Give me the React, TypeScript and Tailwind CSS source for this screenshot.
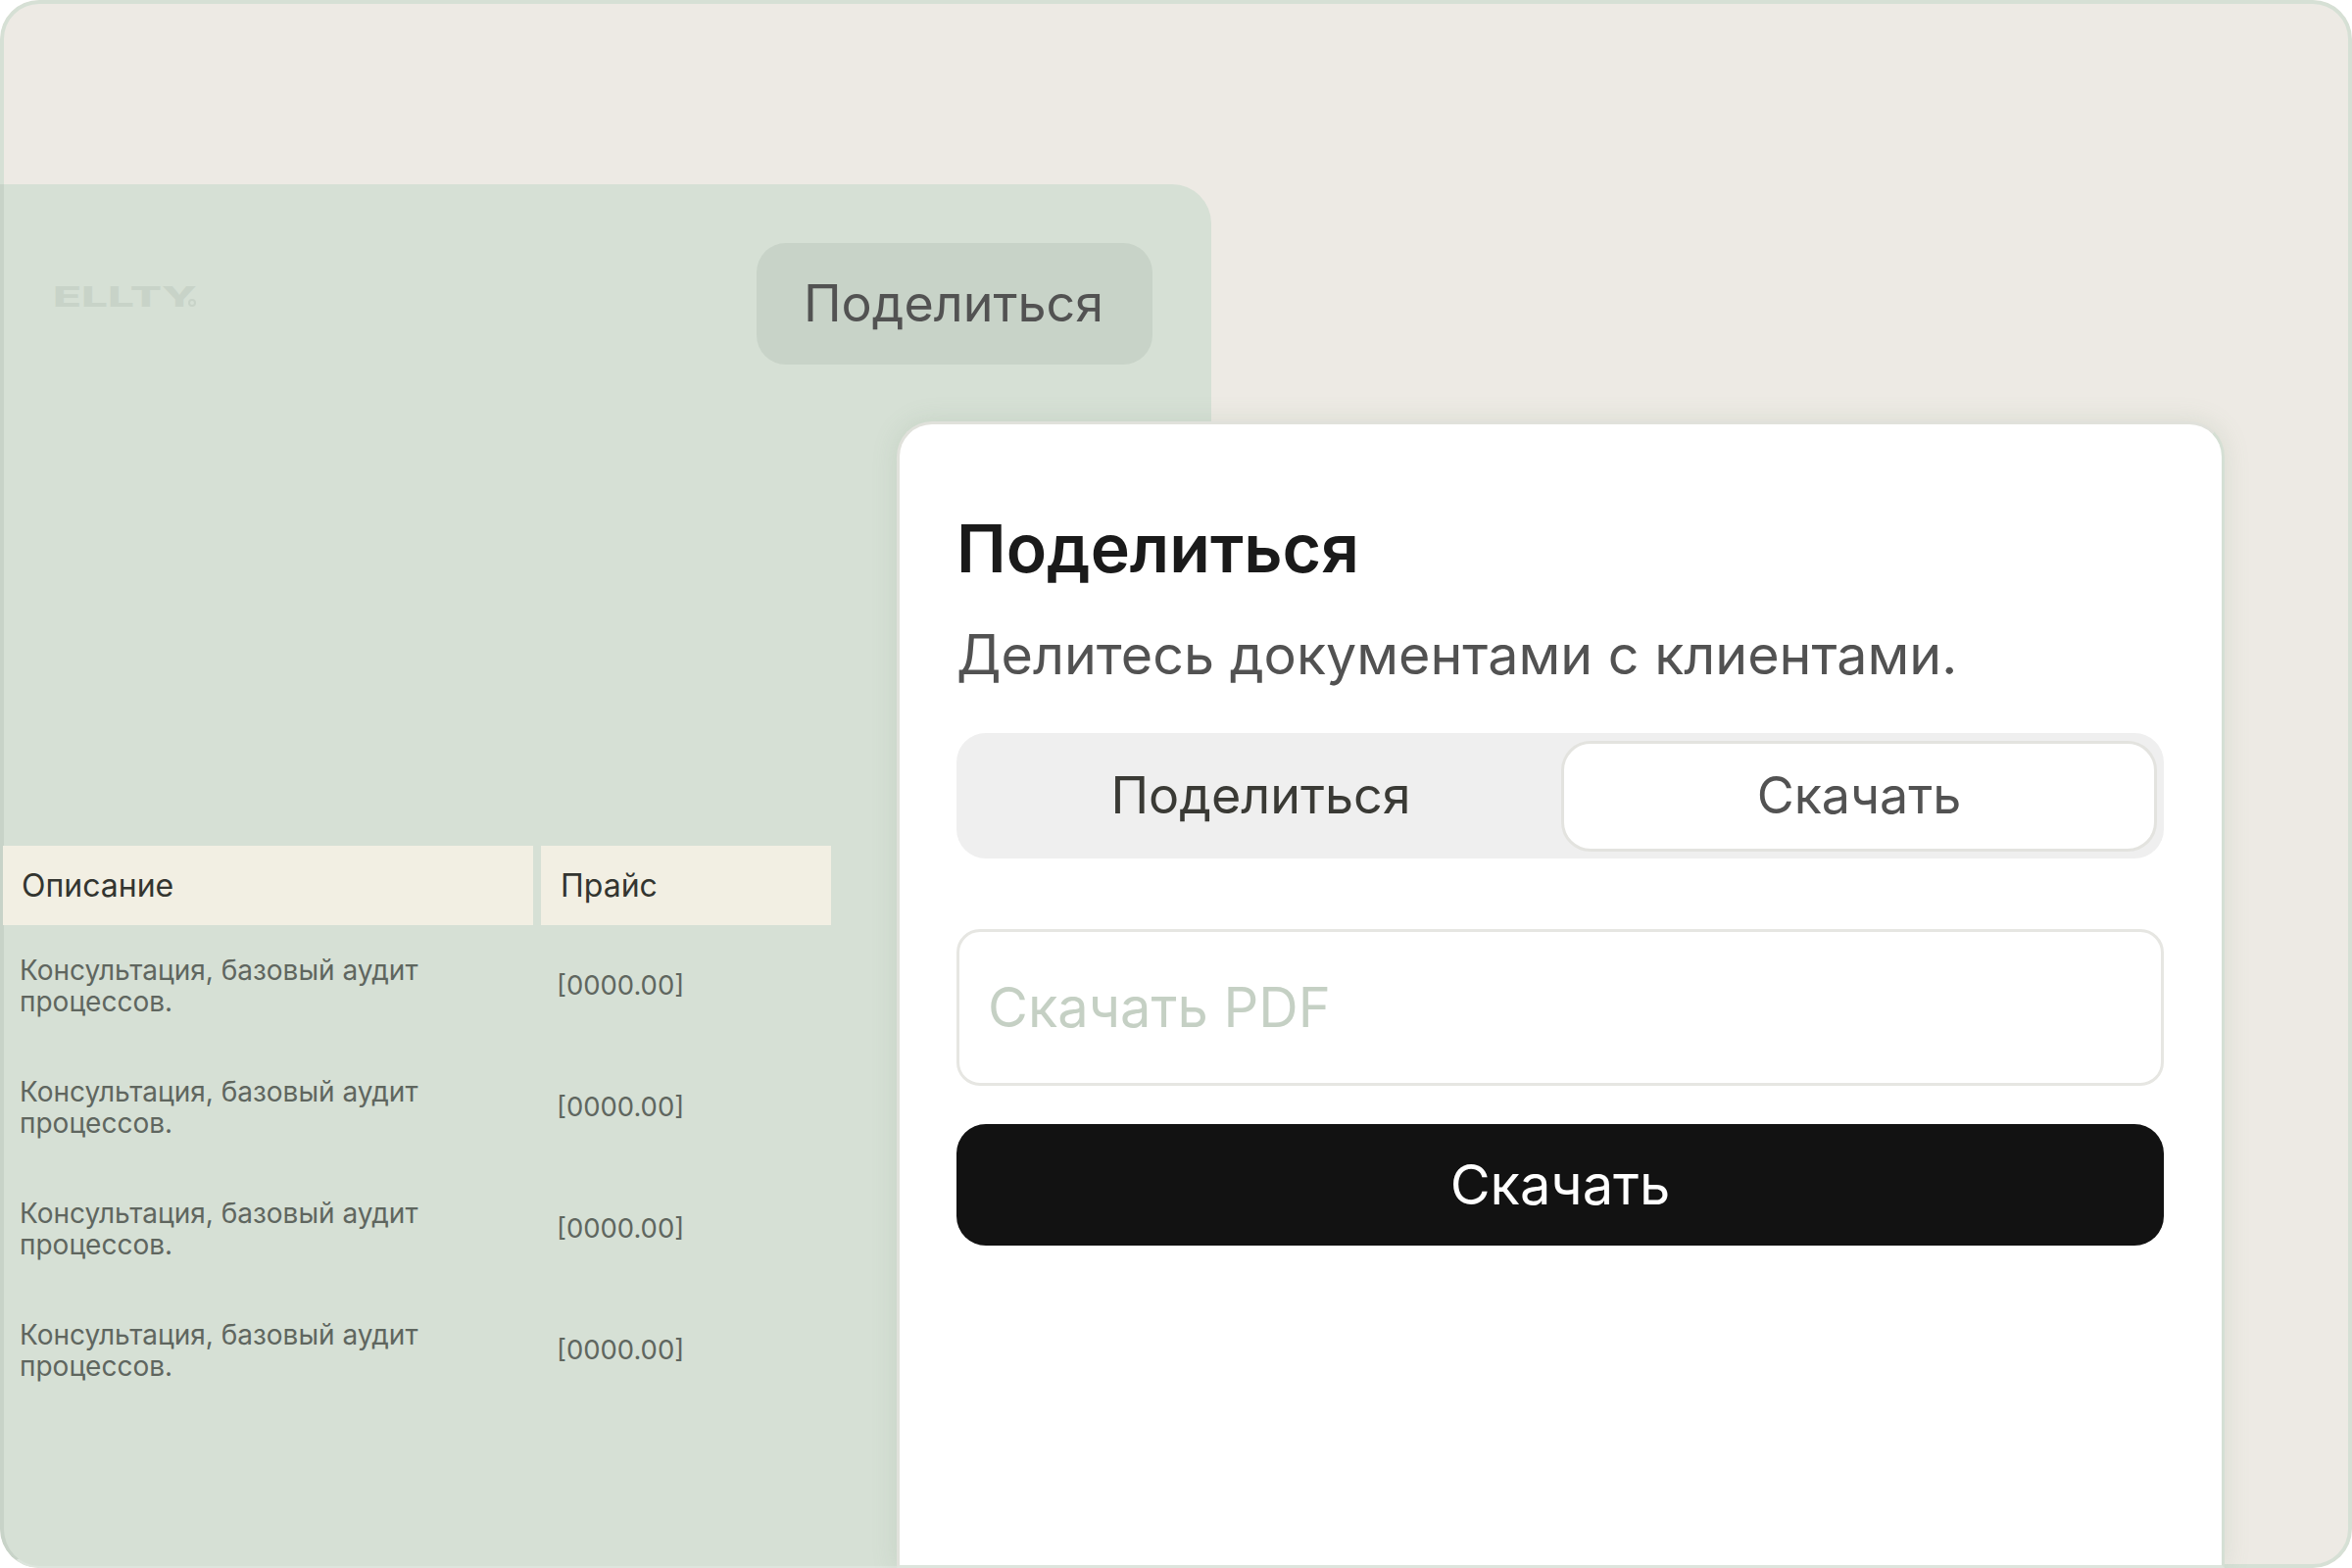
import React from 'react';

const rows = [1, 2, 3, 4];

function PriceTable() {
    return (
        <div className="grid grid-cols-[541px_296px] gap-x-2 mt-[491px] -ml-px">
            <div className="h-[81px] bg-[#f2efe3] flex items-center pl-[19px] text-[32px] text-[#333530]">Описание</div>
            <div className="h-[81px] bg-[#f2efe3] flex items-center pl-5 text-[32px] text-[#333530]">Прайс</div>
            {rows.map((row) => (
                <React.Fragment key={row}>
                    <div className="h-[124px] flex items-center pl-[17px] text-[28px] leading-8 text-[#5f665f]">
                        <p className="w-[460px]">Консультация, базовый аудит процессов.</p>
                    </div>
                    <div className="h-[124px] flex items-center pl-[16px] text-[27.4px] text-[#5f665f]">[0000.00]</div>
                </React.Fragment>
            ))}
        </div>
    );
}

function ShareModal() {
    return (
        <div className="absolute left-[915px] top-[430px] w-[1355px] h-[1170px] z-20 bg-white rounded-t-[36px] border-[3px] border-[#e0e1db] border-r-[#d5dfd4] border-b-[#dde5dd] pl-[58px] pr-[59px] pt-[82px] shadow-[0_0_26px_rgba(110,140,110,0.17)]">
            <h2 className="text-[68px] leading-[88px] font-semibold text-[#1a1a1a]">Поделиться</h2>
            <p className="mt-[31px] text-[55.6px] leading-[68px] text-[#525252]">Делитесь документами с клиентами.</p>
            <div className="mt-[46px] h-32 rounded-[30px] bg-[#efefef] flex items-center p-[7px]">
                <div className="flex-1 pr-[3px] text-center text-[52px] text-[#3a3a35]">Поделиться</div>
                <div className="w-[608px] h-[113px] rounded-[30px] bg-white border-[3px] border-[#e3e3df] flex items-center justify-center text-[52px] text-[#525252]">
                    Скачать
                </div>
            </div>
            <input
                readOnly
                placeholder="Скачать PDF"
                className="mt-[72px] block w-full h-40 rounded-3xl border-[3px] border-[#e6e6e2] pl-[29px] text-[56px] outline-none placeholder:text-[#c5d0c4]"
            />
            <button className="mt-[39px] w-full h-[124px] rounded-[30px] bg-[#121212] text-[56px] text-white">Скачать</button>
        </div>
    );
}

export default function App() {
    return (
        <div className="relative w-[2400px] h-[1600px] overflow-hidden rounded-[40px] bg-[#edeae4] pt-[188px] font-['Inter',sans-serif]">
            <div className="absolute inset-0 rounded-[40px] border-4 border-[#d6e0d5]" />
            <div className="relative z-10 w-[1236px] h-full rounded-tr-[40px] rounded-bl-[40px] bg-[#d6e0d5] border-l-4 border-b-2 border-l-[#c8d3c8] border-b-[#dde5dd]">
                <div className="flex justify-between items-start pt-[60px] pr-[60px]">
                    <div className="flex items-end ml-[50px] mt-[45px] text-[#c8d3c8]">
                        <span className="origin-left scale-x-[1.7] text-[28px] leading-5 font-extrabold w-[138px]">ELLTY</span>
                        <span className="w-2 h-2 rounded-full border-2 border-[#c8d3c8]" />
                    </div>
                    <div className="w-[404px] h-[124px] rounded-[30px] bg-[#c8d3c8] flex items-center justify-center pr-[2px] text-[52px] text-[#525252]">
                        Поделиться
                    </div>
                </div>
                <PriceTable />
            </div>
            <ShareModal />
        </div>
    );
}
